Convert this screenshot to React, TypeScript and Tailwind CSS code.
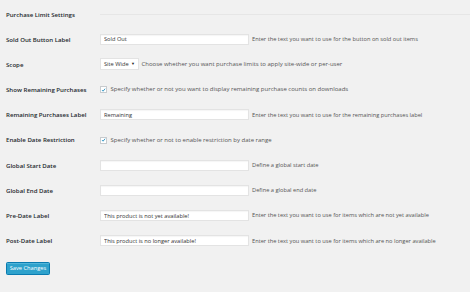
import React from "react";

const font = { fontFamily: '"Open Sans", "Liberation Sans", sans-serif' };

function Row({ label, children }: { label: string; children: React.ReactNode }) {
  return (
    <div className="flex h-[25.2px] items-center">
      <div className="w-[94px] shrink-0 text-[6.1px] font-semibold text-[#23282d]">{label}</div>
      <div className="flex items-center">{children}</div>
    </div>
  );
}

function TextInput({ value }: { value?: string }) {
  return (
    <input
      type="text"
      defaultValue={value}
      className="h-[11px] w-[149px] border border-[#e3e3e3] bg-white px-[3px] text-[5.7px] text-[#333] shadow-[inset_0_1px_1px_rgba(0,0,0,0.04)] outline-none"
    />
  );
}

// descriptions next to inputs are smaller than the checkbox / select labels
function Desc({ children, ml = "ml-[3px]", size = "text-[5.7px]" }: { children: React.ReactNode; ml?: string; size?: string }) {
  return <span className={`${ml} ${size} text-[#555]`}>{children}</span>;
}

function Check() {
  return (
    <span className="flex h-[7px] w-[7px] items-center justify-center border border-[#c8cbce] bg-white">
      <svg viewBox="0 0 10 10" className="h-[6px] w-[6px]">
        <path d="M2 5.2 L4.2 7.4 L8.2 2.4" fill="none" stroke="#1e8cbe" strokeWidth="1.8" />
      </svg>
    </span>
  );
}

export default function App() {
  return (
    <div className="h-[292px] w-[470px] overflow-hidden bg-[#f1f1f1] px-[6px] pt-[1.5px]" style={font}>
      <div className="flex h-[25.2px] items-center">
        <div className="w-[94px] shrink-0 text-[6.1px] font-semibold text-[#23282d]">Purchase Limit Settings</div>
        <div className="mr-[-6px] h-px flex-1 bg-[#e6e6e6]" />
      </div>

      <Row label="Sold Out Button Label">
        <TextInput value="Sold Out" />
        <Desc>Enter the text you want to use for the button on sold out items</Desc>
      </Row>

      <Row label="Scope">
        <span className="flex h-[12px] w-[39px] items-center justify-between border border-[#e3e3e3] bg-white pl-[3px] pr-[3px] text-[5.7px] text-[#333]">
          Site Wide
          <span className="text-[4px] text-[#222]">▼</span>
        </span>
        <Desc ml="ml-[2.5px]" size="text-[6px]">
          Choose whether you want purchase limits to apply site-wide or per-user
        </Desc>
      </Row>

      <Row label="Show Remaining Purchases">
        <Check />
        <Desc ml="ml-[3.5px]" size="text-[6px]">
          Specify whether or not you want to display remaining purchase counts on downloads
        </Desc>
      </Row>

      <Row label="Remaining Purchases Label">
        <TextInput value="Remaining" />
        <Desc>Enter the text you want to use for the remaining purchases label</Desc>
      </Row>

      <Row label="Enable Date Restriction">
        <Check />
        <Desc ml="ml-[3.5px]" size="text-[6px]">
          Specify whether or not to enable restriction by date range
        </Desc>
      </Row>

      <Row label="Global Start Date">
        <TextInput />
        <Desc>Define a global start date</Desc>
      </Row>

      <Row label="Global End Date">
        <TextInput />
        <Desc>Define a global end date</Desc>
      </Row>

      <Row label="Pre-Date Label">
        <TextInput value="This product is not yet available!" />
        <Desc>Enter the text you want to use for items which are not yet available</Desc>
      </Row>

      <Row label="Post-Date Label">
        <TextInput value="This product is no longer available!" />
        <Desc>Enter the text you want to use for items which are no longer available</Desc>
      </Row>

      <button
        type="button"
        className="mt-[8.5px] flex h-[13px] w-[44px] items-center justify-center rounded-[1.5px] border border-[#0a7bb0] bg-[#2ea2cc] text-[5.7px] text-white shadow-[inset_0_1px_0_rgba(120,200,230,0.5)]"
      >
        Save Changes
      </button>
    </div>
  );
}
